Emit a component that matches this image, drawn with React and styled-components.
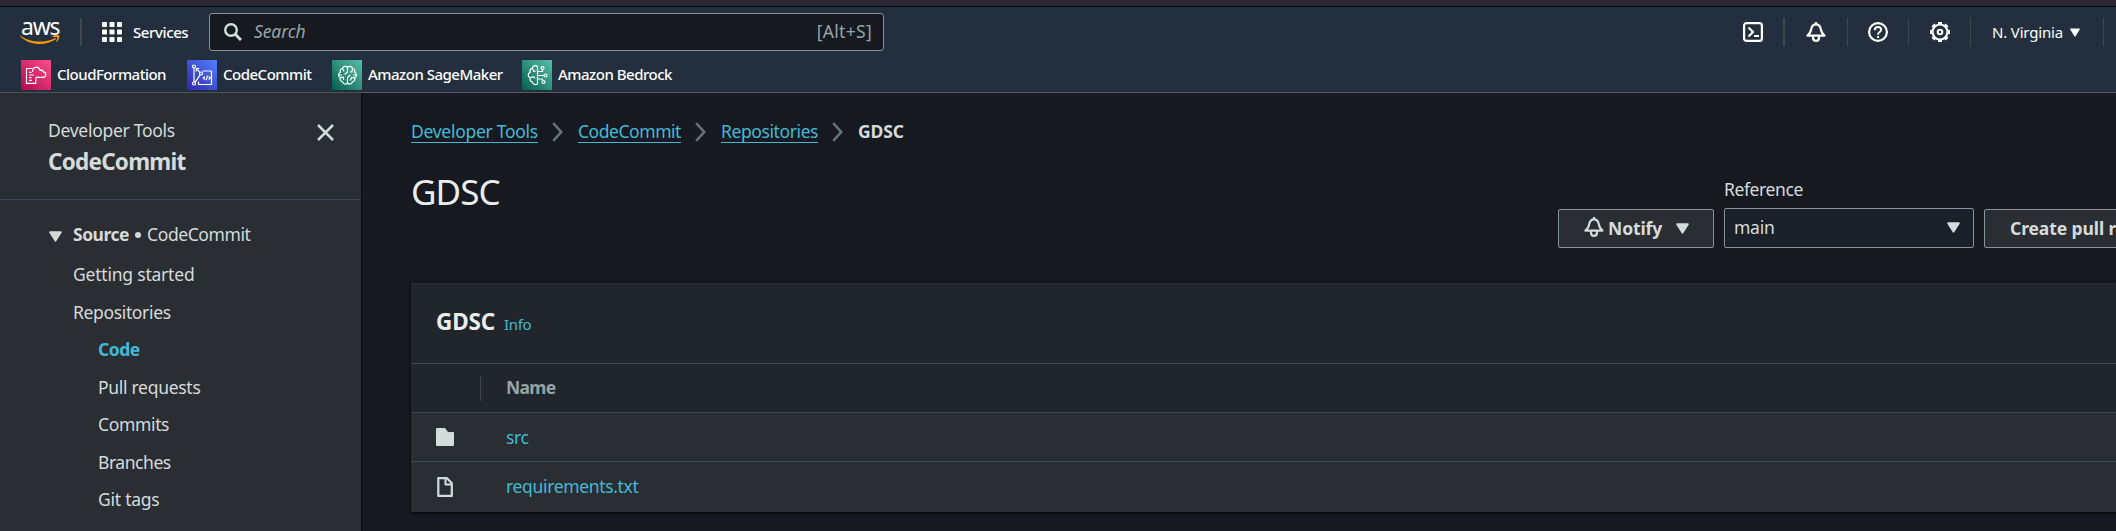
import React from 'react';
import styled, { createGlobalStyle } from 'styled-components';

const GlobalStyle = createGlobalStyle`
  * { box-sizing: border-box; }
  body {
    margin: 0;
    background: #16191f;
    font-family: "Noto Sans", "Open Sans", sans-serif;
    font-size: 17.5px;
    color: #d5dbdb;
    overflow: hidden;
  }
`;

const Page = styled.div`
  width: 100%;
  height: 531px;
  display: flex;
  flex-direction: column;
  overflow: hidden;
`;

const BrowserEdge = styled.div`
  flex: none;
  height: 7px;
  background: #2b2833;
  border-bottom: 1px solid #0c0c0e;
`;

const Header = styled.header`
  flex: none;
  height: 86px;
  background: #232f3e;
  border-bottom: 1px solid #545b64;
  color: #fff;
`;

const NavRow = styled.div`
  display: flex;
  align-items: center;
  height: 50px;
  padding: 0 12px 0 20px;
`;

const Logo = styled.a`
  display: flex;
  flex-direction: column;
  width: 40px;
  height: 30px;
  svg { flex: none; }
`;

const LogoWord = styled.span`
  height: 18px;
  padding-left: 1px;
  font: 400 23px/18px "Noto Sans", sans-serif;
  letter-spacing: -1.2px;
`;

const Divider = styled.span`
  flex: none;
  width: ${(p) => p.$w || 1}px;
  height: 28px;
  margin-left: ${(p) => p.$before}px;
  background: #414750;
`;

const Services = styled.div`
  display: flex;
  align-items: center;
  gap: 11px;
  width: 127px;
  padding-left: 20px;
  font-size: 15px;
  font-weight: 500;
  letter-spacing: -0.4px;
`;

const SearchBox = styled.div`
  display: flex;
  align-items: center;
  width: 675px;
  height: 38px;
  padding: 0 11px 0 14px;
  border: 1px solid #879596;
  border-radius: 3px;
  background: #16191f;
  color: #95a5a6;
  svg { margin-right: 12px; }
`;

const Placeholder = styled.span`
  flex: 1;
  padding-bottom: 2px;
  font-style: italic;
  letter-spacing: -0.11px;
`;

const Shortcut = styled.span`
  padding-bottom: 2px;
  letter-spacing: 0.3px;
`;

const NavTools = styled.div`
  display: flex;
  align-items: center;
  margin-left: auto;
`;

const ToolIcon = styled.span`
  display: flex;
  margin-left: ${(p) => p.$before}px;
`;

const Region = styled.span`
  display: flex;
  align-items: center;
  justify-content: space-between;
  width: 88px;
  margin-left: 21px;
  font-size: 15px;
  letter-spacing: -0.17px;
`;

const Favorites = styled.div`
  display: flex;
  height: 35px;
  padding: 3px 0 0 21px;
`;

const Favorite = styled.a`
  display: flex;
  align-items: center;
  gap: 6px;
  width: ${(p) => p.$w}px;
  height: 30px;
  font-size: 15px;
  font-weight: 500;
  letter-spacing: -0.5px;
  white-space: nowrap;
  span { padding-bottom: 2px; }
`;

const Body = styled.div`
  flex: 1;
  display: flex;
  min-height: 0;
`;

const Sidebar = styled.aside`
  flex: none;
  width: 361px;
  background: #2a2e33;
  box-shadow: 1px 0 1px rgba(0, 0, 0, 0.5);
`;

const SideHead = styled.div`
  display: flex;
  justify-content: space-between;
  height: 107px;
  padding: 24px 27px 0 48px;
  border-bottom: 1px solid #414750;
`;

const CloseIcon = styled.svg`
  margin-top: 7px;
`;

const SideService = styled.div`
  line-height: 26px;
  letter-spacing: -0.28px;
`;

const SideTitle = styled.div`
  font-size: 22.5px;
  font-weight: 700;
  line-height: 37px;
  letter-spacing: -0.75px;
`;

const NavList = styled.ul`
  margin: 0;
  padding: 20px 0 0 73px;
  list-style: none;
`;

const NavItem = styled.li`
  height: ${(p) => p.$h}px;
  padding-left: ${(p) => (p.$nested ? 25 : 0)}px;
  line-height: 26px;
  letter-spacing: ${(p) => p.$track}px;
  font-weight: ${(p) => (p.$active ? 700 : 400)};
  color: ${(p) => (p.$active ? '#44b9d6' : '#d5dbdb')};
`;

const SourceItem = styled.li`
  display: flex;
  align-items: center;
  height: 41px;
  margin-left: -24px;
  padding-bottom: 14px;
  svg { margin-top: 6px; }
  b { margin-left: 11px; letter-spacing: -0.48px; }
  span { letter-spacing: -0.4px; }
`;

const Dot = styled.i`
  width: 6px;
  height: 6px;
  margin: 3px 6px 0 6px;
  border-radius: 50%;
  background: #d5dbdb;
`;

const Content = styled.main`
  flex: 1;
  min-width: 0;
  padding-left: 50px;
  overflow: hidden;
`;

const Breadcrumbs = styled.nav`
  display: flex;
  align-items: center;
  height: 26px;
  margin-top: 25px;
  svg { margin: 2px 15px 0 14px; }
  b { letter-spacing: -0.1px; }
`;

const Crumb = styled.a`
  display: block;
  width: ${(p) => p.$w}px;
  height: 24px;
  line-height: 24px;
  border-bottom: 1px solid #44b9d6;
  color: #44b9d6;
  letter-spacing: ${(p) => p.$track}px;
  white-space: nowrap;
`;

const TitleRow = styled.div`
  display: flex;
  justify-content: space-between;
  height: 139px;
`;

const Title = styled.h1`
  margin: 23px 0 0;
  font-size: 35px;
  font-weight: 400;
  line-height: 49px;
  letter-spacing: -0.9px;
  color: #eaeded;
`;

const Actions = styled.div`
  flex: none;
  display: flex;
  align-items: flex-start;
  gap: 10px;
  width: 558px;
  margin-top: 32px;
`;

const Button = styled.button`
  flex: none;
  display: flex;
  align-items: center;
  width: ${(p) => p.$w}px;
  height: 39px;
  margin-top: 33px;
  padding: 0 0 1px ${(p) => p.$pad}px;
  border: 1px solid #879596;
  border-radius: 2px;
  background: #2a2e33;
  color: #d5dbdb;
  font: 700 17.5px "Noto Sans", sans-serif;
  letter-spacing: -0.1px;
  text-align: left;
  white-space: nowrap;
  svg:first-child { margin-bottom: 3px; }
  svg:last-child { margin-top: 1px; }
`;

const ButtonLabel = styled.span`
  width: 68px;
  margin-left: 4px;
`;

const Field = styled.label`
  flex: none;
  display: block;
  width: 250px;
  line-height: 26px;
  letter-spacing: -0.39px;
`;

const Select = styled.div`
  display: flex;
  align-items: center;
  justify-content: space-between;
  height: 40px;
  margin-top: 6px;
  padding: 0 13px 1px 9px;
  border: 1px solid #879596;
  border-radius: 2px;
  background: #1a2029;
  span { padding-bottom: 1px; letter-spacing: -0.25px; }
`;

const Panel = styled.section`
  height: 229px;
  background: #21252c;
  border-top: 1px solid #2a2e33;
  box-shadow: 0 1px 2px 1px rgba(0, 0, 0, 0.5);
`;

const PanelHead = styled.div`
  display: flex;
  align-items: baseline;
  height: 80px;
  padding: 21px 0 0 25px;
  border-bottom: 1px solid #414750;
`;

const PanelTitle = styled.h2`
  width: 68px;
  margin: 0;
  font-size: 22.5px;
  line-height: 34px;
  letter-spacing: -0.1px;
  color: #eaeded;
`;

const InfoLink = styled.a`
  font-size: 15px;
  letter-spacing: -0.3px;
  color: #44b9d6;
`;

const Row = styled.div`
  display: flex;
  align-items: center;
  height: ${(p) => p.$h}px;
  padding-left: 25px;
  border-bottom: ${(p) => (p.$last ? 'none' : '1px solid #414750')};
  background: ${(p) => (p.$head ? 'transparent' : '#2a2e33')};
`;

const IconCell = styled.div`
  flex: none;
  display: flex;
  align-items: center;
  width: 45px;
  height: 25px;
  margin-right: 25px;
  border-right: 1px solid ${(p) => (p.$line ? '#414750' : 'transparent')};
`;

const ColumnName = styled.b`
  padding-bottom: 2px;
  color: #95a5a6;
  letter-spacing: -0.7px;
`;

const FileLink = styled.a`
  padding-bottom: ${(p) => p.$lift}px;
  color: #44b9d6;
  letter-spacing: -0.34px;
`;

const Caret = ({ w = 13, h = 11, color = '#d5dbdb' }) => (
  <svg width={w} height={h} viewBox="0 0 12 10">
    <path d="M1 1h10L6 9z" fill={color} stroke={color} strokeWidth="1.6" strokeLinejoin="round" />
  </svg>
);

const Chevron = () => (
  <svg width="11" height="20" viewBox="0 0 11 20" fill="none" stroke="#687078" strokeWidth="2.6">
    <path d="M1.2 1.2 9.2 10l-8 8.800" />
  </svg>
);

const Bell = ({ w = 20, h = 20, color = '#fff' }) => (
  <svg width={w} height={h} viewBox="0 0 20 20" fill="none" stroke={color} strokeWidth="2.2" strokeLinejoin="round">
    <path d="M10 0v3M1.4 13.6h17.2c-2.600-1.900-3.400-3.700-3.900-6.700C14.200 4.200 12.300 2.300 10 2.300S5.800 4.200 5.300 6.900c-.5 3-1.300 4.800-3.900 6.700z" />
    <path d="M7 14v1.800c0 1.700 1.300 3.100 3 3.100s3-1.400 3-3.100V14" />
  </svg>
);

const GRID = [0, 7.5, 15];
const AppsGrid = () => (
  <svg width="20" height="20" fill="#fff">
    {GRID.map((y) => GRID.map((x) => <rect key={`${x}-${y}`} x={x} y={y} width="5" height="5" rx=".8" />))}
  </svg>
);

const GEAR_TEETH = [0, 45, 90, 135, 180, 225, 270, 315];
const Gear = () => (
  <svg width="20" height="20" viewBox="0 0 20 20" fill="none" stroke="#fff">
    <circle cx="10" cy="10" r="7.5" strokeWidth="2.200" />
    <circle cx="10" cy="10" r="2.300" strokeWidth="2" />
    {GEAR_TEETH.map((a) => (
      <path key={a} d="M8 1.200h4" strokeWidth="2.400" transform={`rotate(${a} 10 10)`} />
    ))}
  </svg>
);

const ServiceTile = ({ id, from, to, children }) => (
  <svg width="30" height="30" viewBox="0 0 30 30" fill="none" stroke="#fff" strokeWidth="1.200" strokeLinejoin="round">
    <defs>
      <linearGradient id={id} x1="0" y1="1" x2="1" y2="0">
        <stop offset="0" stopColor={from} />
        <stop offset="1" stopColor={to} />
      </linearGradient>
    </defs>
    <rect width="30" height="30" fill={`url(#${id})`} stroke="none" />
    {children}
  </svg>
);

const CloudFormationIcon = () => (
  <ServiceTile id="cf" from="#b0084d" to="#ff4f8b">
    <path d="M11 8.500H5.500v14.800h9.300v-5.100M8 12.300h2.500M8 15h5M8 17.700h2.500M8 20.400h3" />
    <path d="M14.500 17.300h7c2.200 0 3.300-1.200 3.300-2.800 0-1.500-1-2.500-2.600-2.700-.2-1.800-1.900-2.300-3-1.300-.9-2.600-2.900-3.800-5-3.200-2 .6-2.900 2.300-2.500 4.600" />
  </ServiceTile>
);

const CodeCommitIcon = () => (
  <ServiceTile id="cc" from="#2e27ad" to="#527fff">
    <circle cx="7" cy="6.500" r="1.500" />
    <circle cx="7" cy="23.500" r="1.500" />
    <circle cx="14" cy="13.500" r="1.500" />
    <path d="M7 8v14M8 22.300l5.200-7.500M13 12.400 9.300 8.500M9.300 11.500v-3h3" />
    <path d="M15.500 11h9v13.500h-13V21.500M17.800 16.300l-1.500 1.700 1.500 1.700M21.700 16.300l1.500 1.700-1.500 1.700M20.500 15.800l-1.400 4.400" />
  </ServiceTile>
);

const SageMakerIcon = () => (
  <ServiceTile id="sm" from="#055f4e" to="#56c0a7">
    <path d="M15.500 7.500c-1.500-1.800-4.500-1.300-5 1-2 0-3 2-2 3.800-2.600 1-2.600 4.400 0 5.400-1 1.800 0 3.800 2 3.800.5 2.800 3.500 3.300 5 1.500 1.500 1.800 4.500 1.300 5-1.500 2 0 3-2 2-3.800 2.600-1 2.600-4.400 0-5.400 1-1.800 0-3.800-2-3.800-.5-2.300-3.500-2.800-5-1z" />
    <path d="M15.500 7.500V12l-3 2.500M15.500 23v-5.500l3-2.500M10.500 8.500l1.500 3M8.500 17.700l3-.7v3M20.500 8.500l-.5 3.500h-2M22.500 17.700l-3-.2-1 3M7 15h3M21 15h3.500" />
  </ServiceTile>
);

const BedrockIcon = () => (
  <ServiceTile id="br" from="#055f4e" to="#56c0a7">
    <path d="M15.500 6.500V24M15.500 6.500c-2.500-1.800-4.800-.5-5.200 1.800-2 .3-2.700 2-2 3.800-2.800 1.200-2.800 4.600 0 5.800-.7 1.800 0 3.600 2 3.900.4 2.400 2.900 3.600 5.200 2.200" />
    <path d="M10.300 8.300l1.500 3.200 2-.5M8.300 17.900l3.200-1.400 1.500 2M15.500 11.500h5V9.500M15.500 15.500h6.500M15.500 19h5v1.500" />
    <circle cx="20.500" cy="8" r="1.500" />
    <circle cx="23.500" cy="15.500" r="1.500" />
    <circle cx="21.500" cy="22" r="1.500" />
  </ServiceTile>
);

const FAVORITES = [
  { name: 'CloudFormation', Icon: CloudFormationIcon, w: 166 },
  { name: 'CodeCommit', Icon: CodeCommitIcon, w: 145 },
  { name: 'Amazon SageMaker', Icon: SageMakerIcon, w: 190 },
  { name: 'Amazon Bedrock', Icon: BedrockIcon, w: 160 },
];

const NAV = [
  { label: 'Getting started', h: 38, track: -0.21 },
  { label: 'Repositories', h: 37, track: -0.35 },
  { label: 'Code', h: 37.5, track: -0.5, nested: true, active: true },
  { label: 'Pull requests', h: 37.5, track: -0.29, nested: true },
  { label: 'Commits', h: 37.5, track: -0.35, nested: true },
  { label: 'Branches', h: 37.5, track: -0.45, nested: true },
  { label: 'Git tags', h: 37.5, track: -0.24, nested: true },
];

export default function App() {
  return (
    <Page>
      <GlobalStyle />
      <BrowserEdge />
      <Header>
        <NavRow>
          <Logo>
            <LogoWord>aws</LogoWord>
            <svg width="40" height="10" viewBox="0 0 40 10" fill="#ff9900">
              <path d="M.4.800C9 7.300 24 8.600 35 3.200c1-.5 1.700.4.700 1.100C26 11.200 10 11 .300 1.600c-.5-.5-.3-1.100.1-.8z" />
              <path d="M32.500 1.200c1.800-1.300 6.300-1.600 6.700-.7.400 1-.5 4.700-2.500 6.300-.4.300-.7.100-.5-.4.500-1.200 1.400-3.500 1-4.100-.5-.6-3-.400-4.300-.2-.6.100-.8-.5-.4-.9z" />
            </svg>
          </Logo>
          <Divider $before={20} $w={2} />
          <Services>
            <AppsGrid />
            Services
          </Services>
          <SearchBox>
            <svg width="18" height="18" viewBox="0 0 18 18" fill="none" stroke="#d5dbdb" strokeWidth="2.400">
              <circle cx="7" cy="7" r="5.800" />
              <path d="m11 11 6 6" strokeWidth="3" />
            </svg>
            <Placeholder>Search</Placeholder>
            <Shortcut>[Alt+S]</Shortcut>
          </SearchBox>
          <NavTools>
            <ToolIcon $before={0}>
              <svg width="20" height="20" viewBox="0 0 20 20" fill="none" stroke="#fff" strokeWidth="2.200">
                <rect x="1.100" y="1.100" width="17.800" height="17.800" rx="2.500" />
                <path d="m5.500 5.500 4.500 4.500-4.500 4.500M11 14h5" />
              </svg>
            </ToolIcon>
            <Divider $before={20} $w={2} />
            <ToolIcon $before={21}><Bell /></ToolIcon>
            <Divider $before={21} />
            <ToolIcon $before={20}>
              <svg width="20" height="20" viewBox="0 0 20 20" fill="none" stroke="#fff" strokeWidth="2.200">
                <circle cx="10" cy="10" r="8.900" />
                <path d="M6.800 8.200C6.800 6 8.200 5 10 5s3.200 1.100 3.200 2.800c0 2.200-3.100 2.300-3.100 4.500v.4M10.100 14v2.100" strokeWidth="2" />
              </svg>
            </ToolIcon>
            <Divider $before={20} />
            <ToolIcon $before={21}><Gear /></ToolIcon>
            <Divider $before={20} />
            <Region>
              N. Virginia
              <Caret w={10} h={9} color="#fff" />
            </Region>
            <Divider $before={23} />
          </NavTools>
        </NavRow>
        <Favorites>
          {FAVORITES.map(({ name, Icon, w }) => (
            <Favorite key={name} $w={w}>
              <Icon />
              <span>{name}</span>
            </Favorite>
          ))}
        </Favorites>
      </Header>
      <Body>
        <Sidebar>
          <SideHead>
            <div>
              <SideService>Developer Tools</SideService>
              <SideTitle>CodeCommit</SideTitle>
            </div>
            <CloseIcon width="17" height="17" viewBox="0 0 17 17" stroke="#d5dbdb" strokeWidth="2.500">
              <path d="m1 1 15 15M16 1 1 16" />
            </CloseIcon>
          </SideHead>
          <NavList>
            <SourceItem>
              <Caret />
              <b>Source</b>
              <Dot />
              <span>CodeCommit</span>
            </SourceItem>
            {NAV.map(({ label, h, track, nested, active }) => (
              <NavItem key={label} $h={h} $track={track} $nested={nested} $active={active}>
                {label}
              </NavItem>
            ))}
          </NavList>
        </Sidebar>
        <Content>
          <Breadcrumbs>
            <Crumb $w={127} $track={-0.28}>Developer Tools</Crumb>
            <Chevron />
            <Crumb $w={103} $track={-0.45}>CodeCommit</Crumb>
            <Chevron />
            <Crumb $w={97} $track={-0.4}>Repositories</Crumb>
            <Chevron />
            <b>GDSC</b>
          </Breadcrumbs>
          <TitleRow>
            <Title>GDSC</Title>
            <Actions>
              <Button $w={156} $pad={25}>
                <Bell color="#d5dbdb" />
                <ButtonLabel>Notify</ButtonLabel>
                <Caret />
              </Button>
              <Field>
                Reference
                <Select>
                  <span>main</span>
                  <Caret />
                </Select>
              </Field>
              <Button $w={220} $pad={25}>Create pull request</Button>
            </Actions>
          </TitleRow>
          <Panel>
            <PanelHead>
              <PanelTitle>GDSC</PanelTitle>
              <InfoLink>Info</InfoLink>
            </PanelHead>
            <Row $h={49} $head>
              <IconCell $line />
              <ColumnName>Name</ColumnName>
            </Row>
            <Row $h={49}>
              <IconCell>
                <svg width="18" height="18" viewBox="0 0 18 18" fill="#d5dbdb">
                  <path d="M1 0h8l3 4h5q1 0 1 1v12q0 1-1 1H1q-1 0-1-1V1q0-1 1-1z" />
                </svg>
              </IconCell>
              <FileLink $lift={1}>src</FileLink>
            </Row>
            <Row $h={50} $last>
              <IconCell>
                <svg width="18" height="20" viewBox="0 0 18 20" fill="none" stroke="#d5dbdb" strokeWidth="2.200" strokeLinejoin="round">
                  <path d="M2.300 1.100h8.500l5 5.200v12.600H2.300z" />
                  <path d="M9.500 1v6.500H16" strokeWidth="2" />
                </svg>
              </IconCell>
              <FileLink $lift={2}>requirements.txt</FileLink>
            </Row>
          </Panel>
        </Content>
      </Body>
    </Page>
  );
}
